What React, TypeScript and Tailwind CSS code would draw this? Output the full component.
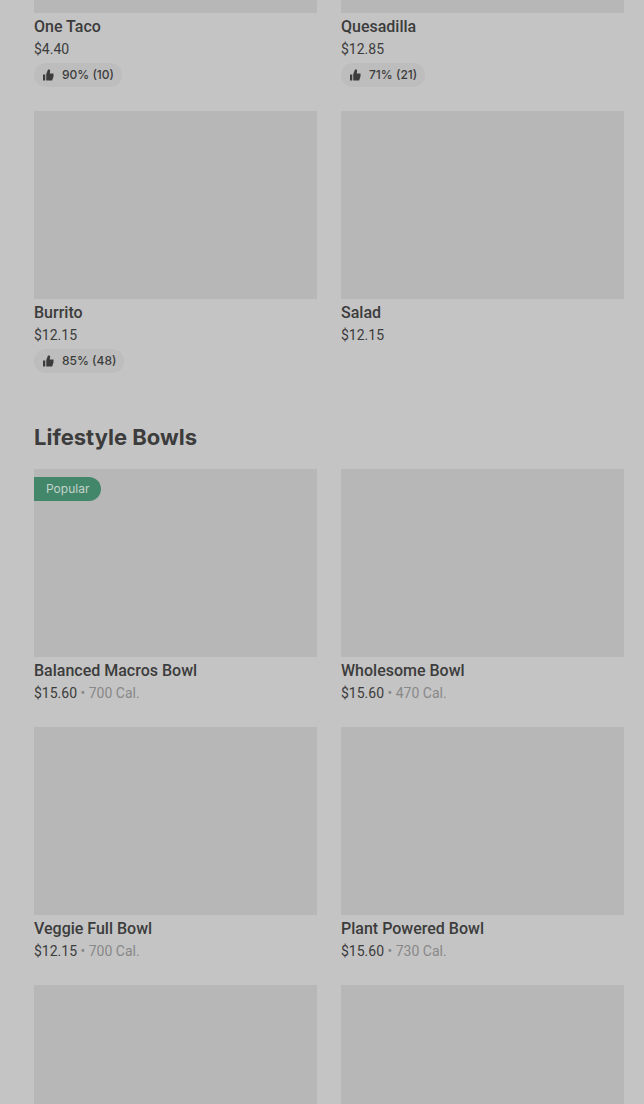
type Item = {
  name: string;
  price: string;
  calories?: string;
  rating?: string;
  popular?: boolean;
  photo?: string;
};

const featured: Item[] = [
  { name: 'One Taco', price: '$4.40', rating: '90% (10)', photo: 'h-[13px]' },
  { name: 'Quesadilla', price: '$12.85', rating: '71% (21)', photo: 'h-[13px]' },
  { name: 'Burrito', price: '$12.15', rating: '85% (48)' },
  { name: 'Salad', price: '$12.15' },
];

const bowls: Item[] = [
  { name: 'Balanced Macros Bowl', price: '$15.60', calories: '700 Cal.', popular: true },
  { name: 'Wholesome Bowl', price: '$15.60', calories: '470 Cal.' },
  { name: 'Veggie Full Bowl', price: '$12.15', calories: '700 Cal.' },
  { name: 'Plant Powered Bowl', price: '$15.60', calories: '730 Cal.' },
];

function ThumbUp() {
  return (
    <svg viewBox="0 0 24 24" className="size-3 shrink-0" fill="currentColor" aria-hidden="true">
      <path d="M2 11h4.500v12H2zM8.500 10l3.500-9h2c1.500 0 2.500 1.200 2.300 2.600L15.500 9H23v6l-2.700 8H8.500z" />
    </svg>
  );
}

function Card({ item }: { item: Item }) {
  return (
    <li>
      <div className={`relative bg-[#b7b7b7] ${item.photo ?? 'aspect-[283/188]'}`}>
        {item.popular && (
          <span className="absolute left-0 top-2 h-6 rounded-r-full bg-[#43876a] px-3 font-['Inter',sans-serif] text-xs leading-6 text-[#c4d2cb]">
            Popular
          </span>
        )}
      </div>
      <h3 className="pt-0.5 text-base font-medium leading-6">{item.name}</h3>
      <p className="text-sm leading-5">
        {item.price}
        {item.calories && <span className="text-[#888888]"> • {item.calories}</span>}
      </p>
      {item.rating && (
        <div className="mt-1 flex h-6 w-fit items-center gap-2 rounded-full bg-[#bdbdbd] px-2 font-['Inter',sans-serif] text-xs font-medium">
          <ThumbUp />
          {item.rating}
        </div>
      )}
    </li>
  );
}

function Grid({ items }: { items: Item[] }) {
  return (
    <ul className="grid grid-cols-2 gap-6">
      {items.map((item) => (
        <Card key={item.name} item={item} />
      ))}
    </ul>
  );
}

export default function App() {
  return (
    <main className="min-h-screen bg-[#c4c4c4] pl-[34px] pr-5 font-['Roboto',sans-serif] text-[#3c3c3c]">
      <Grid items={featured} />
      <section className="mt-12">
        <h2 className="mb-4 font-['Inter',sans-serif] text-[22px] font-bold leading-8">Lifestyle Bowls</h2>
        <Grid items={bowls} />
      </section>
      <div className="mt-6 grid grid-cols-2 gap-6">
        <div className="h-[119px] bg-[#b7b7b7]" />
        <div className="h-[119px] bg-[#b7b7b7]" />
      </div>
    </main>
  );
}
